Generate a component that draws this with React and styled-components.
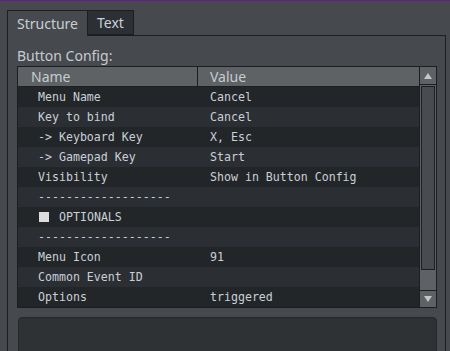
import React from 'react';
import styled, { createGlobalStyle } from 'styled-components';

const GlobalStyle = createGlobalStyle`
  html, body {
    margin: 0;
    padding: 0;
    background: #464a4e;
    overflow: hidden;
  }
`;

const rows = [
  { name: 'Menu Name', value: 'Cancel' },
  { name: 'Key to bind', value: 'Cancel' },
  { name: '-> Keyboard Key', value: 'X, Esc' },
  { name: '-> Gamepad Key', value: 'Start' },
  { name: 'Visibility', value: 'Show in Button Config' },
  { name: '-------------------', value: '' },
  { name: 'OPTIONALS', value: '', marker: true },
  { name: '-------------------', value: '' },
  { name: 'Menu Icon', value: '91' },
  { name: 'Common Event ID', value: '' },
  { name: 'Options', value: 'triggered' },
];

export default function App() {
  return (
    <>
      <GlobalStyle />
      <Window>
        <TabBar>
          <Tab active>Structure</Tab>
          <Tab>Text</Tab>
        </TabBar>
        <Panel>
          <Label>Button Config:</Label>
          <Table>
            <TableBody>
              <HeaderRow>
                <HeaderCell>Name</HeaderCell>
                <HeaderCell divider>Value</HeaderCell>
              </HeaderRow>
              {rows.map((r, i) => (
                <Row key={i} alt={i % 2 === 1}>
                  <NameCell>
                    {r.marker && <Marker />}
                    {r.name}
                  </NameCell>
                  <ValueCell>{r.value}</ValueCell>
                </Row>
              ))}
            </TableBody>
            <Scrollbar>
              <ScrollButton>
                <Arrow />
              </ScrollButton>
              <Track>
                <Thumb />
              </Track>
              <ScrollButton down>
                <Arrow down />
              </ScrollButton>
            </Scrollbar>
          </Table>
          <InfoBox />
        </Panel>
      </Window>
    </>
  );
}

const Window = styled.div`
  height: 351px;
  box-sizing: border-box;
  border-top: 1px solid #6b1c8c;
  padding: 9px 4px 0 7px;
  font-family: 'Noto Sans', 'DejaVu Sans', sans-serif;
`;

const TabBar = styled.div`
  display: flex;
  height: 25px;
  position: relative;
  z-index: 1;
`;

const Tab = styled.div`
  box-sizing: border-box;
  height: ${(p) => (p.active ? '26px' : '25px')};
  padding: 0 9px;
  display: flex;
  align-items: center;
  font-size: 14px;
  color: ${(p) => (p.active ? '#c9ced3' : '#c7d1db')};
  background: ${(p) => (p.active ? '#464a4e' : '#2c2f33')};
  border: 1px solid #1c1f22;
  border-bottom: ${(p) => (p.active ? 'none' : '1px solid #1c1f22')};
  border-left: ${(p) => (p.active ? '1px solid #1c1f22' : 'none')};
  border-radius: 1px 1px 0 0;
`;

const Panel = styled.div`
  border: 1px solid #1c1f22;
  height: 330px;
  box-sizing: border-box;
  padding: 0 8px 0 9px;
  background: #464a4e;
`;

const Label = styled.div`
  font-size: 14px;
  color: #c6cbd0;
  height: 30px;
  line-height: 20px;
  padding-top: 10px;
  box-sizing: border-box;
`;

const Table = styled.div`
  display: flex;
  width: 420px;
  box-sizing: border-box;
  border: 1px solid #1c1f22;
  background: #232629;
`;

const TableBody = styled.div`
  flex: 1;
  display: flex;
  flex-direction: column;
`;

const HeaderRow = styled.div`
  display: grid;
  grid-template-columns: 179px 1fr;
  height: 19px;
  background: #5e6265;
  border-bottom: 1px solid #1c1f22;
`;

const HeaderCell = styled.div`
  font-size: 14px;
  color: #c6cbd0;
  line-height: 19px;
  padding-left: ${(p) => (p.divider ? '12px' : '13px')};
  border-left: ${(p) => (p.divider ? '1px solid #1c1f22' : 'none')};
`;

const Row = styled.div`
  display: grid;
  grid-template-columns: 179px 1fr;
  height: 20px;
  background: ${(p) => (p.alt ? '#2b2e32' : '#232629')};
  font-family: 'DejaVu Sans Mono', monospace;
  font-size: 11.6px;
  color: #c9d0d7;
  line-height: 20px;
  white-space: pre;
`;

const NameCell = styled.div`
  padding-left: 20px;
  display: flex;
  align-items: center;
`;

const Marker = styled.span`
  display: inline-block;
  width: 10px;
  height: 10px;
  margin: 0 10px 0 1px;
  background: #dcdcdc;
`;

const ValueCell = styled.div`
  padding-left: 13px;
`;

const Scrollbar = styled.div`
  width: 16px;
  display: flex;
  flex-direction: column;
  border-left: 1px solid #1c1f22;
  background: #5e6265;
`;

const ScrollButton = styled.div`
  height: ${(p) => (p.down ? '16px' : '17px')};
  display: flex;
  align-items: center;
  justify-content: center;
  background: #5e6265;
  border-top: ${(p) => (p.down ? '1px solid #1c1f22' : 'none')};
  border-bottom: ${(p) => (p.down ? 'none' : '1px solid #1c1f22')};
`;

const Arrow = styled.div`
  width: 0;
  height: 0;
  border-left: 4px solid transparent;
  border-right: 4px solid transparent;
  ${(p) =>
    p.down
      ? 'border-top: 6px solid #c4c6c8;'
      : 'border-bottom: 6px solid #c4c6c8;'}
`;

const Track = styled.div`
  flex: 1;
  padding: 1px 1px 0 1px;
  display: flex;
  flex-direction: column;
`;

const Thumb = styled.div`
  height: 184px;
  box-sizing: border-box;
  border: 1px solid #1c1f22;
  background: #484c50;
`;

const InfoBox = styled.div`
  margin-top: 9px;
  width: 419px;
  margin-left: 1px;
  height: 40px;
  box-sizing: border-box;
  background: #2f3235;
  border: 1px solid #26292c;
  border-radius: 4px;
`;
